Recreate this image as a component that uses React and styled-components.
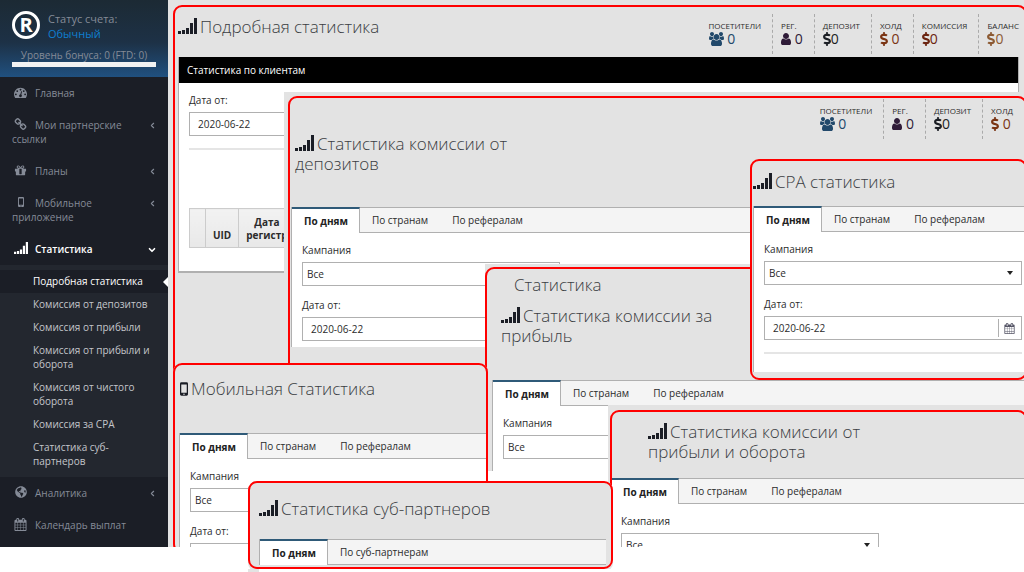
import { useId } from 'react';
import styled, { createGlobalStyle, css } from 'styled-components';
import { FaDollarSign, FaGlobeAmericas } from 'react-icons/fa';
import { ChevronDown, ChevronLeft } from 'lucide-react';

const paper = '#e3e3e3';
const line = '#b0b0b0';

const icons = {
  dashboard: {
    w: 1792,
    d: 'M384 1152q0-53-37.5-90.5t-90.5-37.5-90.5 37.5-37.5 90.5 37.5 90.5 90.5 37.5 90.5-37.5 37.5-90.5zm192-448q0-53-37.5-90.5t-90.5-37.5-90.5 37.5-37.5 90.5 37.5 90.5 90.5 37.5 90.5-37.5 37.5-90.5zm428 481l101-382q6-26-7.5-48.5t-38.5-29.5-48 6.5-30 39.5l-101 382q-60 5-107 43.5t-63 98.5q-20 77 20 146t117 89 146-20 89-117q16-60-6-117t-72-91zm660-33q0-53-37.5-90.5t-90.5-37.5-90.5 37.5-37.5 90.5 37.5 90.5 90.5 37.5 90.5-37.5 37.5-90.5zm-640-640q0-53-37.5-90.5t-90.5-37.5-90.5 37.5-37.5 90.5 37.5 90.5 90.5 37.5 90.5-37.5 37.5-90.5zm448 192q0-53-37.5-90.5t-90.5-37.5-90.5 37.5-37.5 90.5 37.5 90.5 90.5 37.5 90.5-37.5 37.5-90.5zm320 448q0 261-141 483-19 29-54 29h-1402q-35 0-54-29-141-221-141-483 0-182 71-348t191-286 286-191 348-71 348 71 286 191 191 286 71 348z',
  },
  link: {
    w: 1792,
    d: 'M1520 1216q0-40-28-68l-208-208q-28-28-68-28-42 0-72 32 3 3 19 18.5t21.5 21.5 15 19 13 25.5 3.5 27.5q0 40-28 68t-68 28q-15 0-27.5-3.5t-25.5-13-19-15-21.5-21.5-18.5-19q-33 31-33 73 0 40 28 68l206 207q27 27 68 27 40 0 68-26l147-146q28-28 28-67zm-703-705q0-40-28-68l-206-207q-28-28-68-28-39 0-68 27l-147 146q-28 28-28 67 0 40 28 68l208 208q27 27 68 27 42 0 72-31-3-3-19-18.5t-21.5-21.5-15-19-13-25.5-3.5-27.5q0-40 28-68t68-28q15 0 27.5 3.5t25.5 13 19 15 21.5 21.5 18.5 19q33-31 33-73zm895 705q0 120-85 203l-147 146q-83 83-203 83-121 0-204-85l-206-207q-83-83-83-203 0-123 88-209l-88-88q-86 88-208 88-120 0-204-84l-208-208q-84-84-84-204t85-203l147-146q83-83 203-83 121 0 204 85l206 207q83 83 83 203 0 123-88 209l88 88q86-88 208-88 120 0 204 84l208 208q84 84 84 204z',
  },
  gift: {
    w: 1792,
    d: 'M1056 1356v-716h-320v716q0 25 18 38.5t46 13.5h192q28 0 46-13.5t18-38.5zm-456-844h195l-126-161q-26-31-69-31-40 0-68 28t-28 68 28 68 68 28zm688-96q0-40-28-68t-68-28q-43 0-69 31l-125 161h194q40 0 68-28t28-68zm376 256v320q0 14-9 23t-23 9h-96v416q0 40-28 68t-68 28h-1088q-40 0-68-28t-28-68v-416h-96q-14 0-23-9t-9-23v-320q0-14 9-23t23-9h440q-93 0-158.5-65.5t-65.5-158.5 65.5-158.5 158.5-65.5q107 0 168 77l128 165 128-165q61-77 168-77 93 0 158.5 65.5t65.5 158.5-65.5 158.5-158.5 65.5h440q14 0 23 9t9 23z',
  },
  calendar: {
    w: 1792,
    d: 'M192 1664h288v-288h-288v288zm352 0h320v-288h-320v288zm-352-352h288v-320h-288v320zm352 0h320v-320h-320v320zm-352-384h288v-288h-288v288zm736 736h320v-288h-320v288zm-384-736h320v-288h-320v288zm768 736h288v-288h-288v288zm-384-352h320v-320h-320v320zm-352-864v-288q0-13-9.5-22.5t-22.5-9.5h-64q-13 0-22.5 9.5t-9.5 22.5v288q0 13 9.5 22.5t22.5 9.5h64q13 0 22.5-9.5t9.5-22.5zm736 864h288v-320h-288v320zm-384-384h320v-288h-320v288zm384 0h288v-288h-288v288zm32-480v-288q0-13-9.5-22.5t-22.5-9.5h-64q-13 0-22.5 9.5t-9.5 22.5v288q0 13 9.5 22.5t22.5 9.5h64q13 0 22.5-9.5t9.5-22.5zm384-64v1280q0 52-38 90t-90 38h-1408q-52 0-90-38t-38-90v-1280q0-52 38-90t90-38h128v-96q0-66 47-113t113-47h64q66 0 113 47t47 113v96h384v-96q0-66 47-113t113-47h64q66 0 113 47t47 113v96h128q52 0 90 38t38 90z',
  },
  users: {
    w: 1920,
    d: 'M593 896q-162 5-265 128h-134q-82 0-138-40.5t-56-118.5q0-353 124-353 6 0 43.5 21t97.5 42.5 119 21.5q67 0 133-23-5 37-5 66 0 139 81 256zm1071 637q0 120-73 189.5t-194 69.5h-874q-121 0-194-69.5t-73-189.5q0-53 3.5-103.5t14-109 26.5-108.5 43-97.5 62-81 85.5-53.5 111.5-20q10 0 43 21.5t73 48 107 48 135 21.5 135-21.5 107-48 73-48 43-21.5q61 0 111.5 20t85.5 53.5 62 81 43 97.5 26.5 108.5 14 109 3.5 103.5zm-1024-1277q0 106-75 181t-181 75-181-75-75-181 75-181 181-75 181 75 75 181zm704 384q0 159-112.5 271.5t-271.5 112.5-271.5-112.5-112.5-271.5 112.5-271.5 271.5-112.5 271.5 112.5 112.5 271.5zm576 225q0 78-56 118.5t-138 40.5h-134q-103-123-265-128 81-117 81-256 0-29-5-66 66 23 133 23 59 0 119-21.5t97.5-42.5 43.5-21q124 0 124 353zm-128-609q0 106-75 181t-181 75-181-75-75-181 75-181 181-75 181 75 75 181z',
  },
  user: {
    w: 1280,
    d: 'M1280 1399q0 109-62.500 187t-150.500 78h-854q-88 0-150.500-78t-62.500-187q0-85 8.500-160.500t31.500-152 58.500-131 94-89 134.500-34.500q131 128 313 128t313-128q76 0 134.500 34.500t94 89 58.500 131 31.500 152 8.500 160.500zm-256-887q0 159-112.500 271.500t-271.500 112.500-271.500-112.500-112.500-271.500 112.500-271.500 271.500-112.500 271.500 112.500 112.500 271.500z',
  },
  signal: {
    w: 2128,
    d: 'M0 1456h336v336H0zM448 1344h336v448H448zM896 1120h336v672H896zM1344 560h336v1232h-336zM1792 0h336v1792h-336z',
  },
  mobile: {
    w: 1075,
    d: 'M192 0h691q192 0 192 192v1408q0 192-192 192H192Q0 1792 0 1600V192Q0 0 192 0zM170 280v1130h735V280zM437 1600a100 100 0 1 0 200 0 100 100 0 1 0-200 0z',
  },
};

function Icon({ name, size = 14 }) {
  const icon = icons[name];
  return (
    <svg width={Math.round((size * icon.w) / 1792)} height={size} viewBox={`0 0 ${icon.w} 1792`} fill="currentColor" fillRule="evenodd" aria-hidden="true">
      <path d={icon.d} />
    </svg>
  );
}

const menu = [
  { icon: 'dashboard', text: 'Главная', size: 13 },
  { icon: 'link', text: 'Мои партнерские ссылки', size: 13, more: true },
  { icon: 'gift', text: 'Планы', size: 13, more: true },
  { icon: 'mobile', text: 'Мобильное приложение', size: 10, more: true },
  {
    icon: 'signal',
    text: 'Статистика',
    size: 12,
    open: true,
    items: [
      'Подробная статистика',
      'Комиссия от депозитов',
      'Комиссия от прибыли',
      'Комиссия от прибыли и оборота',
      'Комиссия от чистого оборота',
      'Комиссия за CPA',
      'Статистика суб-партнеров',
    ],
  },
  { icon: 'globe', text: 'Аналитика', more: true },
  { icon: 'calendar', text: 'Календарь выплат', size: 13 },
];

const stats = [
  { label: 'Посетители', color: '#22496b', icon: 'users', value: ' 0' },
  { label: 'Рег.', color: '#2f1b38', icon: 'user', value: ' 0' },
  { label: 'Депозит', color: '#1b1e24', value: '0' },
  { label: 'Холд', color: '#7a3413', value: ' 0' },
  { label: 'Комиссия', color: '#6b2410', value: '0' },
  { label: 'Баланс', color: '#8c5a33', value: '0' },
];

const mainTabs = ['По дням', 'По странам', 'По рефералам'];

function Sidebar() {
  return (
    <Side>
      <Account>
        <AccountTop>
          <Mark>R</Mark>
          <AccountText>
            Статус счета:
            <a href="#status">Обычный</a>
          </AccountText>
        </AccountTop>
        <Bonus>Уровень бонуса: 0 (FTD: 0)</Bonus>
        <Bar />
      </Account>
      <nav>
        {menu.map((item) => (
          <div key={item.text}>
            <MenuLink href="#menu" $open={item.open}>
              <MenuIcon>
                {item.icon === 'globe' ? <FaGlobeAmericas size={12} /> : <Icon name={item.icon} size={item.size} />}
              </MenuIcon>
              {item.text}
              {item.more && <Arrow><ChevronLeft size={9} strokeWidth={3} /></Arrow>}
              {item.open && <Arrow><ChevronDown size={10} strokeWidth={4} /></Arrow>}
            </MenuLink>
            {item.items && (
              <Submenu>
                {item.items.map((text, i) => (
                  <SubLink key={text} href="#stat" $active={i === 0}>{text}</SubLink>
                ))}
              </Submenu>
            )}
          </div>
        ))}
      </nav>
    </Side>
  );
}

function Stats({ items = stats, open = false }) {
  return (
    <StatList $open={open}>
      {items.map((s) => (
        <Stat key={s.label}>
          <StatLabel>{s.label}</StatLabel>
          <StatValue $color={s.color}>
            {s.icon ? <Icon name={s.icon} size={14} /> : <Dollar />}
            {s.value}
          </StatValue>
        </Stat>
      ))}
    </StatList>
  );
}

function Heading({ icon = 'signal', children, ...rest }) {
  return (
    <Title {...rest}>
      {icon && <Icon name={icon} size={icon === 'signal' ? 16 : 14} />}
      {children}
    </Title>
  );
}

function Tabs({ tabs = mainTabs, tuck = 0, end = 12, children }) {
  return (
    <TabBox $tuck={tuck}>
      <TabBar role="tablist">
        {tabs.map((tab, i) => (
          <Tab key={tab} type="button" role="tab" aria-selected={i === 0} $active={i === 0}>{tab}</Tab>
        ))}
      </TabBar>
      {children && <TabBody $end={end}>{children}</TabBody>}
    </TabBox>
  );
}

function Campaign() {
  const id = useId();
  return (
    <Field>
      <label htmlFor={id}>Кампания</label>
      <Control>
        <Select id={id} defaultValue="all">
          <option value="all">Все</option>
        </Select>
        <Caret />
      </Control>
    </Field>
  );
}

function DateFrom() {
  const id = useId();
  return (
    <Field>
      <label htmlFor={id}>Дата от:</label>
      <Control>
        <DateInput id={id} type="text" defaultValue="2020-06-22" />
        <Picker><Icon name="calendar" size={11} /></Picker>
      </Control>
    </Field>
  );
}

function App() {
  return (
    <Page>
      <GlobalStyle />
      <Sidebar />
      <Stage>
        <Board>
          <Slab $left={5} $top={5} $right={-3} $bottom={-6}>
            <Frame $inset="0 6px 0 3px">
              <Head>
                <Heading $top={10} $bottom={20}>Подробная статистика</Heading>
                <Stats open />
              </Head>
              <Widget>
                <WidgetTitle>Статистика по клиентам</WidgetTitle>
                <WidgetBody>
                  <DateFrom />
                  <Divider />
                  <Clients>
                    <thead>
                      <tr>
                        <th></th>
                        <th>UID</th>
                        <th>Дата<br />регистр</th>
                      </tr>
                    </thead>
                  </Clients>
                </WidgetBody>
              </Widget>
            </Frame>
          </Slab>

          <Slab $left={116} $top={92} $right={-3} $bottom={-6} $pad="4px 0 0 4px">
            <Frame $inset="0 12px 0 2px">
              <Head>
                <Heading $top={36} $bottom={33} $indent={3}>Статистика комиссии от депозитов</Heading>
                <Stats items={stats.slice(0, 4)} />
              </Head>
              <Tabs tuck={1} end={6}>
                <Campaign />
                <DateFrom />
              </Tabs>
            </Frame>
          </Slab>

          <Slab $left={317} $top={264} $right={-3} $bottom={-6} $pad="3px 0 0">
            <Frame $inset="0 0 0 5px">
              <Heading as="h1" icon={null} $top={6} $indent={22}>Статистика</Heading>
              <Heading $top={11} $bottom={34} $indent={9}>Статистика комиссии за прибыль</Heading>
              <Tabs>
                <Campaign />
              </Tabs>
              <Rest />
            </Frame>
          </Slab>

          <Slab $left={5} $top={363} $width={315} $bottom={-6}>
            <Frame $inset="0 0 0 4px">
              <Heading icon="mobile" $top={14} $bottom={34} $indent={1}>Мобильная Статистика</Heading>
              <Tabs>
                <Campaign />
                <DateFrom />
              </Tabs>
            </Frame>
          </Slab>

          <Slab $left={582} $top={159} $right={-3}>
            <Frame $inset="0 0 6px 1px">
              <Heading $top={11} $bottom={14}>CPA статистика</Heading>
              <Tabs end={18}>
                <Campaign />
                <DateFrom />
                <Divider />
              </Tabs>
            </Frame>
          </Slab>

          <Slab $left={440} $top={405} $right={-3} $bottom={-60} $pad="5px 0 0 2px">
            <Frame $inset="0 0 0 1px">
              <Heading $top={10} $bottom={16} $indent={35}>Статистика комиссии от прибыли и оборота</Heading>
              <Tabs tuck={3}>
                <Campaign />
              </Tabs>
            </Frame>
          </Slab>
        </Board>

        <Slab $left={80} $top={481} $width={365}>
          <Frame $inset="0 5px 2px 9px">
            <Heading $top={16} $bottom={20}>Статистика суб-партнеров</Heading>
            <Tabs tabs={['По дням', 'По суб-партнерам']} />
          </Frame>
          <Spill />
        </Slab>
      </Stage>
    </Page>
  );
}

export default App;

const GlobalStyle = createGlobalStyle`
  * { box-sizing: border-box; }
  body {
    min-height: 100vh;
    margin: 0;
    background: #fff;
    color: #2b2b2b;
    font-family: "Open Sans", "Noto Sans", sans-serif;
    font-size: 10px;
    line-height: 14px;
    overflow-x: hidden;
  }
  a { color: inherit; text-decoration: none; }
  button, input, select { font: inherit; color: inherit; }
`;

const Page = styled.div`
  display: flex;
`;

const Side = styled.aside`
  flex: none;
  width: 168px;
  padding-bottom: 6px;
  background: #1b1e26;
  color: #858b97;
`;

const Account = styled.div`
  padding: 10px 12px;
  background: linear-gradient(#1c2a34, #1d3146 55%, #20507f);
`;

const AccountTop = styled.div`
  display: flex;
  gap: 8px;
  padding-top: 1px;
`;

const Mark = styled.div`
  display: flex;
  align-items: center;
  justify-content: center;
  width: 28px;
  height: 28px;
  border: 3px solid #fff;
  border-radius: 50%;
  color: #fff;
  font-size: 20px;
  font-weight: 700;
`;

const AccountText = styled.div`
  font-size: 11px;
  line-height: 15px;

  a {
    display: block;
    color: #0f7fd0;
  }
`;

const Bonus = styled.div`
  margin-top: 8px;
  text-align: center;
  line-height: 13px;
`;

const Bar = styled.div`
  height: 5px;
  background: #f2f2f2;
`;

const MenuLink = styled.a`
  position: relative;
  display: block;
  padding: 9px 40px 9px 12px;
  color: ${(p) => (p.$open ? '#fff' : 'inherit')};
  font-weight: ${(p) => (p.$open ? 600 : 400)};
`;

const MenuIcon = styled.span`
  display: inline-flex;
  align-items: center;
  justify-content: center;
  width: 17px;
  height: 12px;
  margin-right: 6px;
  vertical-align: top;
`;

const Arrow = styled.span`
  position: absolute;
  top: 12px;
  right: 11px;
  display: flex;
`;

const Submenu = styled.div`
  padding: 5px 0 4px;
  background: #23272f;
  color: #c3c6cb;
`;

const SubLink = styled.a`
  position: relative;
  display: block;
  padding: 4px 12px 5px 33px;

  ${(p) => p.$active && css`
    background: #1b1e26;
    color: #fff;

    &::after {
      content: '';
      position: absolute;
      top: 7px;
      right: 0;
      border: 5px solid transparent;
      border-left: 0;
      border-right-color: #fff;
    }
  `}
`;

const Stage = styled.main`
  position: relative;
  flex: 1;
  min-width: 0;
`;

const Board = styled.div`
  position: relative;
  height: 100%;
  overflow: hidden;
  background: ${paper};
`;

/* screens are loose sheets, laid one over another */
const Slab = styled.section`
  position: absolute;
  display: flex;
  flex-direction: column;
  left: ${(p) => p.$left}px;
  top: ${(p) => p.$top}px;
  ${(p) => p.$right !== undefined && `right: ${p.$right}px;`}
  ${(p) => p.$bottom !== undefined && `bottom: ${p.$bottom}px;`}
  ${(p) => p.$width && `width: ${p.$width}px;`}
  padding: ${(p) => p.$pad || 0};
  border-radius: ${(p) => (p.$pad ? 0 : '9px')};
  background: ${paper};
`;

const Frame = styled.div`
  display: flex;
  flex-direction: column;
  flex: 1;
  padding: ${(p) => p.$inset || 0};
  border: 2px solid #f00;
  border-radius: 9px;
  overflow: hidden;
`;

const Head = styled.header`
  display: flex;
  justify-content: space-between;
  align-items: flex-start;
`;

const Title = styled.h2`
  box-sizing: content-box;
  width: ${(p) => (p.$indent > 1 ? '220px' : 'auto')};
  margin: 0;
  padding: ${(p) => p.$top}px 0 ${(p) => p.$bottom || 0}px ${(p) => p.$indent || 0}px;
  color: #3a3d42;
  font-size: 17px;
  font-weight: 300;
  line-height: 20px;

  svg {
    margin: 0 3px -1px 0;
    color: #1b1e26;
  }
`;

const StatList = styled.div`
  display: flex;
  padding-top: ${(p) => (p.$open ? 7 : 1)}px;
`;

const Stat = styled.div`
  height: 40px;
  padding: 5px 11px 0 8px;
  border-left: 1px dashed #aaa;

  &:first-child {
    border-left: 0;
  }

  &:last-child {
    padding-right: 0;
  }
`;

const StatLabel = styled.div`
  font-size: 8px;
  line-height: 13px;
  text-transform: uppercase;
`;

const StatValue = styled.div`
  display: flex;
  align-items: center;
  color: ${(p) => p.$color};
  font-size: 14px;
  white-space: pre;
`;

const Dollar = styled(FaDollarSign)`
  width: 8px;
  height: 14px;
`;

const Widget = styled.div`
  border: 1px solid ${line};
  border-top: 0;
  border-bottom-width: 2px;
  background: #fff;
`;

const WidgetTitle = styled.h3`
  margin: 0;
  padding: 6px 8px;
  background: #000;
  color: #fff;
  font-size: 10px;
  font-weight: 400;
`;

const WidgetBody = styled.div`
  display: flex;
  flex-direction: column;
  gap: 12px;
  padding: 10px 10px 23px;
`;

const Divider = styled.hr`
  width: 100%;
  height: 2px;
  margin: 0;
  border: 0;
  background: #e5e5e5;
`;

const Clients = styled.table`
  align-self: flex-start;
  margin-top: 46px;
  border-collapse: collapse;

  th {
    min-width: 16px;
    height: 39px;
    padding: 6px 7px 5px;
    border: 1px solid #ccc;
    background: linear-gradient(#f2f2f2, #e8e8e8);
    line-height: 13px;
    vertical-align: bottom;
  }
`;

const TabBox = styled.div`
  margin-left: ${(p) => -p.$tuck}px;
  border-left: 1px solid ${line};
  background: #fff;
`;

const TabBar = styled.div`
  display: flex;
  height: 26px;
  border-top: 1px solid ${line};
  border-bottom: 1px solid ${line};
  background: #f4f4f4;
`;

const Tab = styled.button`
  margin: 0;
  padding: 0 12px;
  border: 0;
  background: none;
  white-space: nowrap;

  ${(p) => p.$active && css`
    margin: -1px 0;
    padding: 0 11px 0 12px;
    border-top: 2px solid #2f5a78;
    border-right: 1px solid ${line};
    background: #fff;
    color: #222;
    font-weight: 700;
  `}
`;

const TabBody = styled.div`
  display: flex;
  flex-direction: column;
  gap: 12px;
  padding: 10px 3px ${(p) => p.$end}px 10px;
`;

const Field = styled.div`
  display: flex;
  flex-direction: column;
  gap: 5px;
  max-width: 258px;
`;

const Control = styled.div`
  position: relative;
  display: flex;
  align-items: center;
  height: 24px;
  border: 1px solid ${line};
  background: #fff;
`;

const Select = styled.select`
  width: 100%;
  padding: 0 4px;
  border: 0;
  background: none;
  appearance: none;
`;

const Caret = styled.span`
  position: absolute;
  right: 8px;
  border: 3px solid transparent;
  border-top: 4px solid #222;
  border-bottom: 0;
  pointer-events: none;
`;

const DateInput = styled.input`
  flex: 1;
  min-width: 0;
  padding: 0 8px;
  border: 0;
  background: none;
`;

const Picker = styled.span`
  display: flex;
  align-items: center;
  height: 18px;
  padding: 0 6px 0 5px;
  border-left: 1px solid ${line};
  color: #556;
`;

const Rest = styled.div`
  flex: 1;
  margin-left: -5px;
  background: #fff;
`;

const Spill = styled.div`
  height: 3px;
  border-left: 11px solid ${paper};
  background: #fff;
`;
